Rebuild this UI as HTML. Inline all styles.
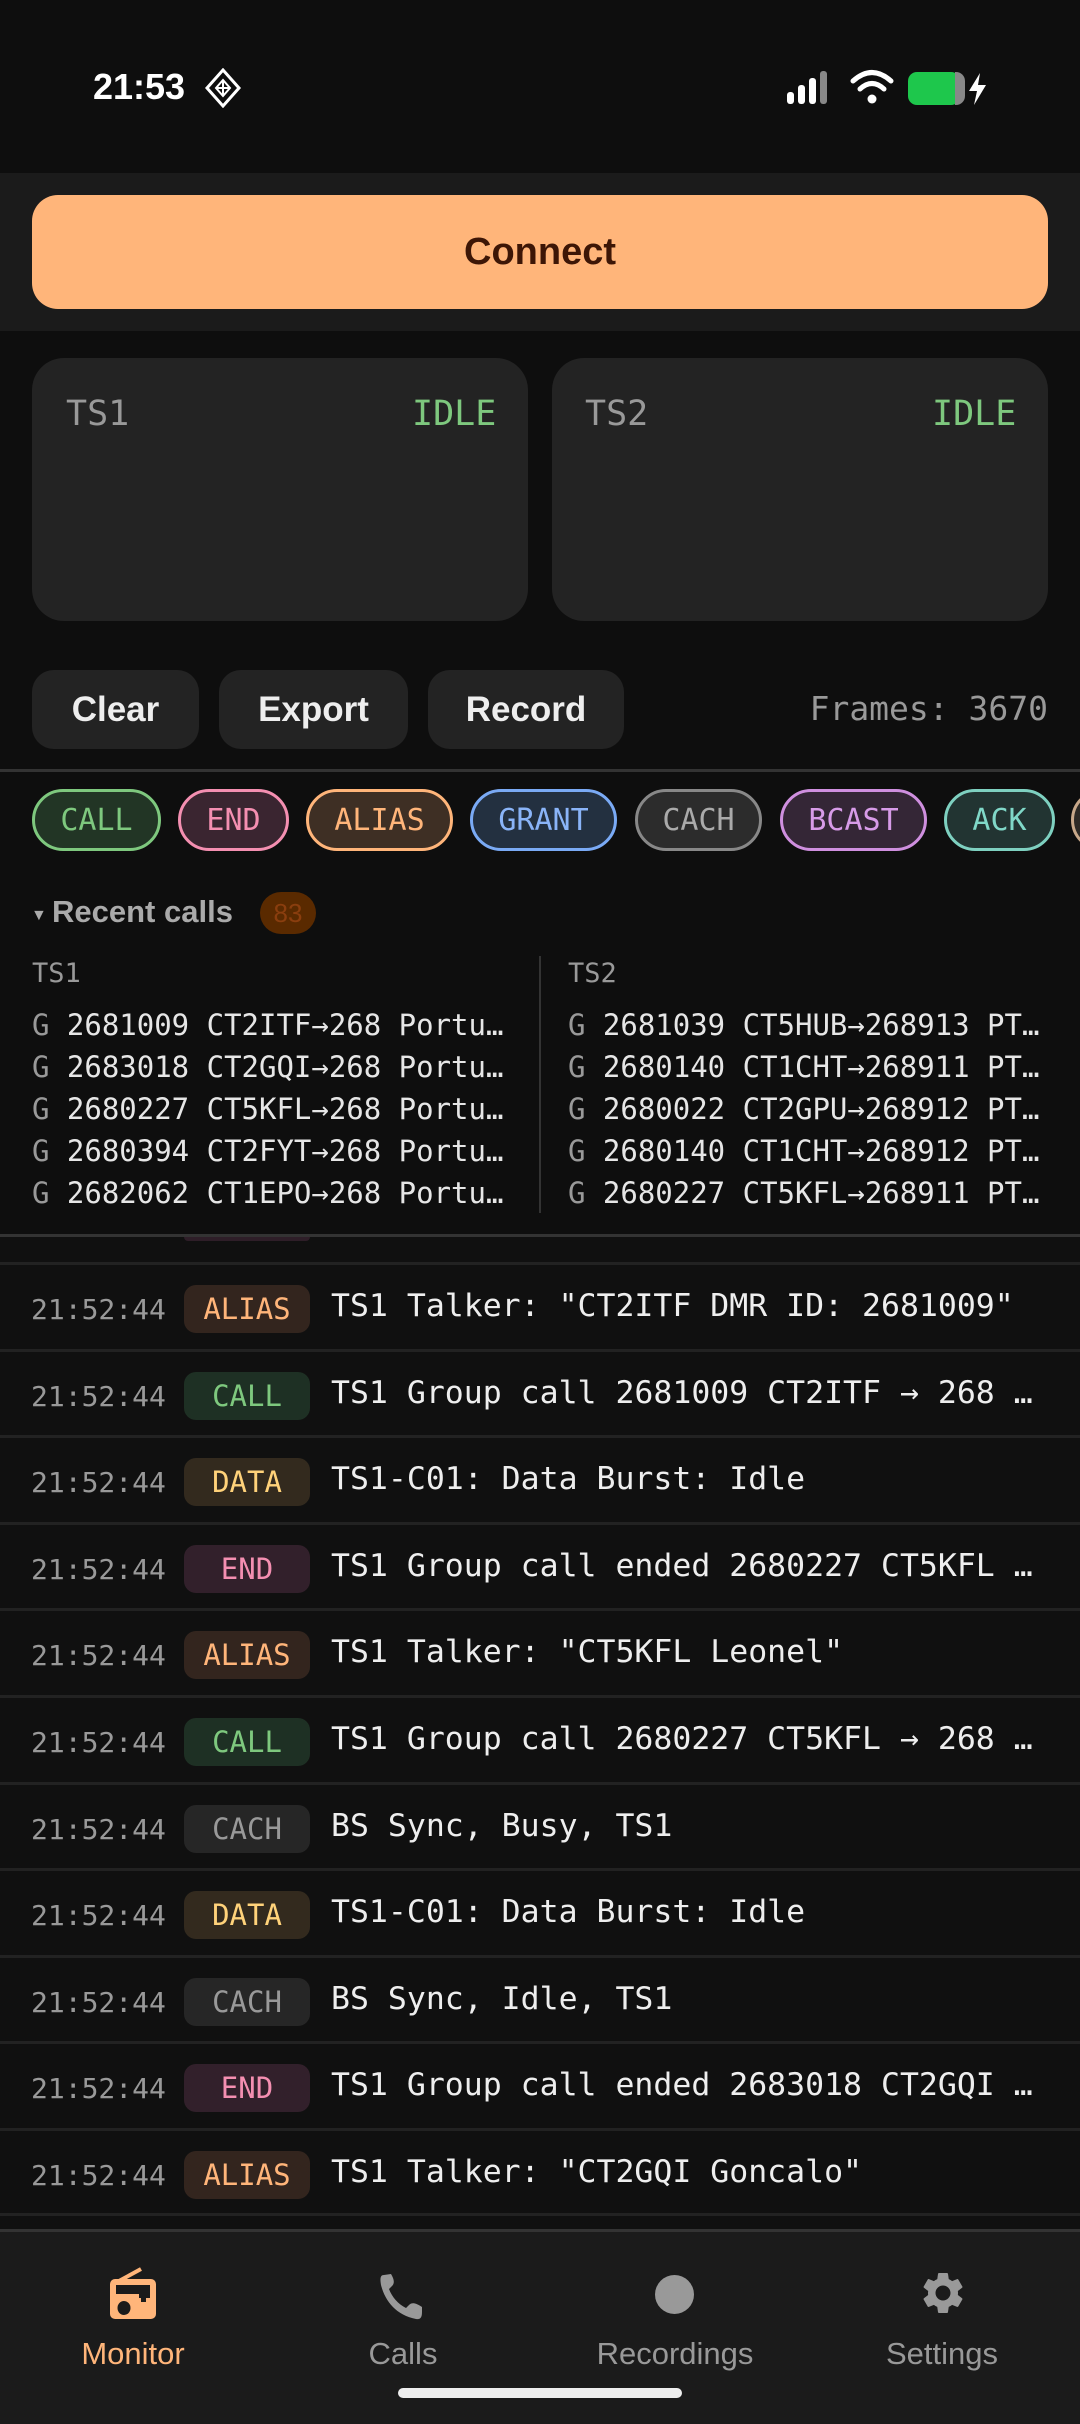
<!DOCTYPE html>
<html><head><meta charset="utf-8"><style>
*{margin:0;padding:0;box-sizing:border-box}
body{width:1080px;height:2424px;background:#0e0e0e;position:relative;overflow:hidden;font-family:"Liberation Sans",sans-serif;color:#eee}
.a{position:absolute}
.mono{font-family:"DejaVu Sans Mono","Liberation Mono",monospace}
.card{background:#232323;border-radius:32px}
.btn{background:#232323;border-radius:22px;color:#eee;font-weight:bold;font-size:35px;display:flex;align-items:center;justify-content:center;height:79px;top:670px}
.chip{top:789px;height:62px;border:3px solid;border-radius:31px;display:flex;align-items:center;justify-content:center;font-size:30px}
.rc{font-size:29px;color:#e6e6e6;white-space:nowrap;line-height:42px}
.rc b{font-weight:normal;color:#999}
.row{left:0;width:1080px;height:87px;border-top:3px solid #222;background:#101010}
.ts{position:absolute;left:31px;top:28px;font-size:28px;color:#999}
.bd{position:absolute;left:184px;top:20px;width:126px;height:48px;border-radius:12px;font-size:29px;display:flex;align-items:center;justify-content:center}
.tx{position:absolute;left:331px;top:23px;width:718px;font-size:31.5px;color:#eee;white-space:nowrap;overflow:hidden;text-overflow:ellipsis}
.nav{font-size:31px;color:#999;text-align:center;width:240px;top:2336px}
</style></head><body>
<div class="a" style="left:93px;top:66px;font-size:36px;font-weight:bold;color:#fff">21:53</div>
<svg class="a" style="left:204px;top:68px" width="38" height="40" viewBox="0 0 38 40"><path d="M19 2 L35 20 L19 38 L3 20 Z" fill="none" stroke="#fff" stroke-width="3"/><path d="M12 20 L19 12 L26 20 L19 28 Z M19 12 V28 M12 20 H26" stroke="#fff" stroke-width="2" fill="none"/></svg>
<svg class="a" style="left:787px;top:70px" width="48" height="36"><rect x="0" y="22" width="7" height="12" rx="3" fill="#fff"/><rect x="11" y="15" width="7" height="19" rx="3" fill="#fff"/><rect x="22" y="8" width="7" height="26" rx="3" fill="#fff"/><rect x="33" y="1" width="7" height="33" rx="3" fill="#888"/></svg>
<svg class="a" style="left:850px;top:68px" width="44" height="38" viewBox="0 0 44 38"><path d="M3 13 Q22 -4 41 13" stroke="#fff" stroke-width="5" fill="none" stroke-linecap="round"/><path d="M10 21 Q22 10 34 21" stroke="#fff" stroke-width="5" fill="none" stroke-linecap="round"/><circle cx="22" cy="31" r="4.5" fill="#fff"/></svg>
<div class="a" style="left:908px;top:72px;width:52px;height:33px;border-radius:9px;background:#1ec74c"></div>
<div class="a" style="left:955px;top:72px;width:10px;height:33px;border-radius:0 9px 9px 0;background:#888"></div>
<svg class="a" style="left:966px;top:72px" width="22" height="34" viewBox="0 0 22 34"><path d="M14 1 L3 19 H11 L8 33 L20 13 H12 Z" fill="#fff"/></svg>

<div class="a" style="left:0;top:173px;width:1080px;height:158px;background:#1b1b1b"></div>
<div class="a" style="left:32px;top:195px;width:1016px;height:114px;border-radius:26px;background:#ffb57a;display:flex;align-items:center;justify-content:center;font-size:38px;font-weight:bold;color:#3d1606">Connect</div>

<div class="a card" style="left:32px;top:358px;width:496px;height:263px"></div>
<div class="a card" style="left:552px;top:358px;width:496px;height:263px"></div>
<div class="a mono" style="left:66px;top:394px;font-size:35px;color:#999">TS1</div>
<div class="a mono" style="left:412px;top:394px;font-size:35px;color:#7ec87e">IDLE</div>
<div class="a mono" style="left:585px;top:394px;font-size:35px;color:#999">TS2</div>
<div class="a mono" style="left:932px;top:394px;font-size:35px;color:#7ec87e">IDLE</div>

<div class="a btn" style="left:32px;width:167px">Clear</div>
<div class="a btn" style="left:219px;width:189px">Export</div>
<div class="a btn" style="left:428px;width:196px">Record</div>
<div class="a mono" style="right:32px;top:689px;font-size:33px;color:#999">Frames: 3670</div>
<div class="a" style="left:0;top:769px;width:1080px;height:3px;background:#333"></div>

<div class="a chip mono" style="left:32px;width:129px;border-color:#7ec87e;background:#223525;color:#7ec87e">CALL</div>
<div class="a chip mono" style="left:178px;width:111px;border-color:#f48fb1;background:#3a2530;color:#f48fb1">END</div>
<div class="a chip mono" style="left:306px;width:147px;border-color:#ffb57a;background:#3e2f24;color:#ffb57a">ALIAS</div>
<div class="a chip mono" style="left:470px;width:147px;border-color:#7aaaf5;background:#233040;color:#8ab4f8">GRANT</div>
<div class="a chip mono" style="left:635px;width:127px;border-color:#888;background:#2c2c2c;color:#aaa">CACH</div>
<div class="a chip mono" style="left:780px;width:147px;border-color:#cf8fdf;background:#342636;color:#d79be8">BCAST</div>
<div class="a chip mono" style="left:944px;width:111px;border-color:#7ed0c0;background:#223432;color:#80d8c8">ACK</div>
<div class="a chip mono" style="left:1071px;width:100px;border-color:#c8a88a;background:#2e2a26"></div>

<div class="a" style="left:31px;top:907px;font-size:16px;color:#aaa">▼</div>
<div class="a" style="left:52px;top:894px;font-size:31px;font-weight:bold;color:#aaa">Recent calls</div>
<div class="a" style="left:260px;top:892px;width:56px;height:42px;border-radius:21px;background:#5a2a00;color:#8a3e0e;font-size:26px;display:flex;align-items:center;justify-content:center">83</div>
<div class="a mono" style="left:32px;top:958px;font-size:27px;color:#999">TS1</div>
<div class="a mono" style="left:568px;top:958px;font-size:27px;color:#999">TS2</div>
<div class="a" style="left:539px;top:956px;width:2px;height:257px;background:#333"></div>
<div class="a mono rc" style="left:32px;top:1004px"><b>G</b> 2681009 CT2ITF→268 Portu…<br><b>G</b> 2683018 CT2GQI→268 Portu…<br><b>G</b> 2680227 CT5KFL→268 Portu…<br><b>G</b> 2680394 CT2FYT→268 Portu…<br><b>G</b> 2682062 CT1EPO→268 Portu…</div>
<div class="a mono rc" style="left:568px;top:1004px"><b>G</b> 2681039 CT5HUB→268913 PT…<br><b>G</b> 2680140 CT1CHT→268911 PT…<br><b>G</b> 2680022 CT2GPU→268912 PT…<br><b>G</b> 2680140 CT1CHT→268912 PT…<br><b>G</b> 2680227 CT5KFL→268911 PT…</div>
<div class="a" style="left:0;top:1234px;width:1080px;height:28px;background:#101010;border-top:3px solid #333"></div>
<div class="a" style="left:184px;top:1237px;width:126px;height:4px;background:#2e1e28;border-radius:0 0 6px 6px"></div>

<div class="a row mono" style="top:1262px"><div class="ts">21:52:44</div><div class="bd" style="background:#33251e;color:#ffb57a">ALIAS</div><div class="tx">TS1 Talker: "CT2ITF DMR ID: 2681009"</div></div>
<div class="a row mono" style="top:1348.6px"><div class="ts">21:52:44</div><div class="bd" style="background:#1e3024;color:#7ec87e">CALL</div><div class="tx">TS1 Group call 2681009 CT2ITF → 268 Portugal</div></div>
<div class="a row mono" style="top:1435.2px"><div class="ts">21:52:44</div><div class="bd" style="background:#332a1e;color:#ffd27a">DATA</div><div class="tx">TS1-C01: Data Burst: Idle</div></div>
<div class="a row mono" style="top:1521.8px"><div class="ts">21:52:44</div><div class="bd" style="background:#32202b;color:#f48fb1">END</div><div class="tx">TS1 Group call ended 2680227 CT5KFL → 268</div></div>
<div class="a row mono" style="top:1608.4px"><div class="ts">21:52:44</div><div class="bd" style="background:#33251e;color:#ffb57a">ALIAS</div><div class="tx">TS1 Talker: "CT5KFL Leonel"</div></div>
<div class="a row mono" style="top:1695px"><div class="ts">21:52:44</div><div class="bd" style="background:#1e3024;color:#7ec87e">CALL</div><div class="tx">TS1 Group call 2680227 CT5KFL → 268 Portugal</div></div>
<div class="a row mono" style="top:1781.6px"><div class="ts">21:52:44</div><div class="bd" style="background:#262626;color:#999">CACH</div><div class="tx">BS Sync, Busy, TS1</div></div>
<div class="a row mono" style="top:1868.2px"><div class="ts">21:52:44</div><div class="bd" style="background:#332a1e;color:#ffd27a">DATA</div><div class="tx">TS1-C01: Data Burst: Idle</div></div>
<div class="a row mono" style="top:1954.8px"><div class="ts">21:52:44</div><div class="bd" style="background:#262626;color:#999">CACH</div><div class="tx">BS Sync, Idle, TS1</div></div>
<div class="a row mono" style="top:2041.4px"><div class="ts">21:52:44</div><div class="bd" style="background:#32202b;color:#f48fb1">END</div><div class="tx">TS1 Group call ended 2683018 CT2GQI → 268</div></div>
<div class="a row mono" style="top:2128px"><div class="ts">21:52:44</div><div class="bd" style="background:#33251e;color:#ffb57a">ALIAS</div><div class="tx">TS1 Talker: "CT2GQI Goncalo"</div></div>
<div class="a" style="left:0;top:2213px;width:1080px;height:19px;background:#101010;border-top:3px solid #222"></div>

<div class="a" style="left:0;top:2229px;width:1080px;height:195px;background:#1b1b1b;border-top:3px solid #333"></div>
<svg class="a" style="left:107px;top:2267px" width="52" height="54" viewBox="0 0 52 54"><path d="M12 14 L34 2" stroke="#ffb57a" stroke-width="4"/><rect x="3" y="12" width="46" height="40" rx="5" fill="#ffb57a"/><rect x="9" y="18" width="34" height="9" fill="#1b1b1b"/><rect x="32" y="26" width="11" height="5" fill="#1b1b1b"/><rect x="34" y="31" width="5" height="4" fill="#1b1b1b"/><ellipse cx="17" cy="41" rx="6.5" ry="7" fill="#1b1b1b"/></svg>
<svg class="a" style="left:378px;top:2271px" width="48" height="50" viewBox="0 0 48 50"><path d="M6 4 C2 4 2 8 3 14 C7 30 18 44 38 48 C44 49 44 44 44 40 L44 36 C38 32 34 31 31 34 L28 37 C20 33 14 26 11 18 L14 15 C17 12 16 8 13 3 Z" fill="#999"/></svg>
<div class="a" style="left:655px;top:2275px;width:39px;height:39px;border-radius:50%;background:#999"></div>
<svg class="a" style="left:918px;top:2268px" width="50" height="50" viewBox="0 0 24 24"><path fill="#999" d="M19.14 12.94c.04-.3.06-.61.06-.94 0-.32-.02-.64-.07-.94l2.030-1.58a.49.49 0 0 0 .12-.61l-1.92-3.32a.488.488 0 0 0-.59-.22l-2.39.96c-.5-.38-1.03-.7-1.62-.94l-.36-2.54a.484.484 0 0 0-.48-.41h-3.84c-.24 0-.43.17-.47.41l-.36 2.54c-.59.24-1.13.57-1.62.94l-2.39-.96c-.22-.08-.47 0-.59.22L2.74 8.87c-.12.21-.08.47.12.61l2.03 1.58c-.05.3-.09.63-.09.94s.02.64.07.94l-2.03 1.58a.49.49 0 0 0-.12.61l1.92 3.32c.12.22.37.29.59.22l2.39-.96c.5.38 1.030.7 1.62.94l.36 2.54c.05.24.24.41.48.41h3.84c.24 0 .44-.17.47-.41l.36-2.54c.59-.24 1.13-.56 1.62-.94l2.39.96c.22.08.47 0 .59-.22l1.92-3.32c.12-.22.07-.47-.12-.61l-2.010-1.58zM12 15.6c-1.98 0-3.6-1.62-3.6-3.6s1.62-3.6 3.6-3.6 3.6 1.62 3.6 3.6-1.62 3.6-3.6 3.6z"/></svg>
<div class="a nav" style="left:13px;color:#ffb57a">Monitor</div>
<div class="a nav" style="left:283px">Calls</div>
<div class="a nav" style="left:555px">Recordings</div>
<div class="a nav" style="left:822px">Settings</div>
<div class="a" style="left:398px;top:2388px;width:284px;height:10px;border-radius:5px;background:#eee"></div>
</body></html>
